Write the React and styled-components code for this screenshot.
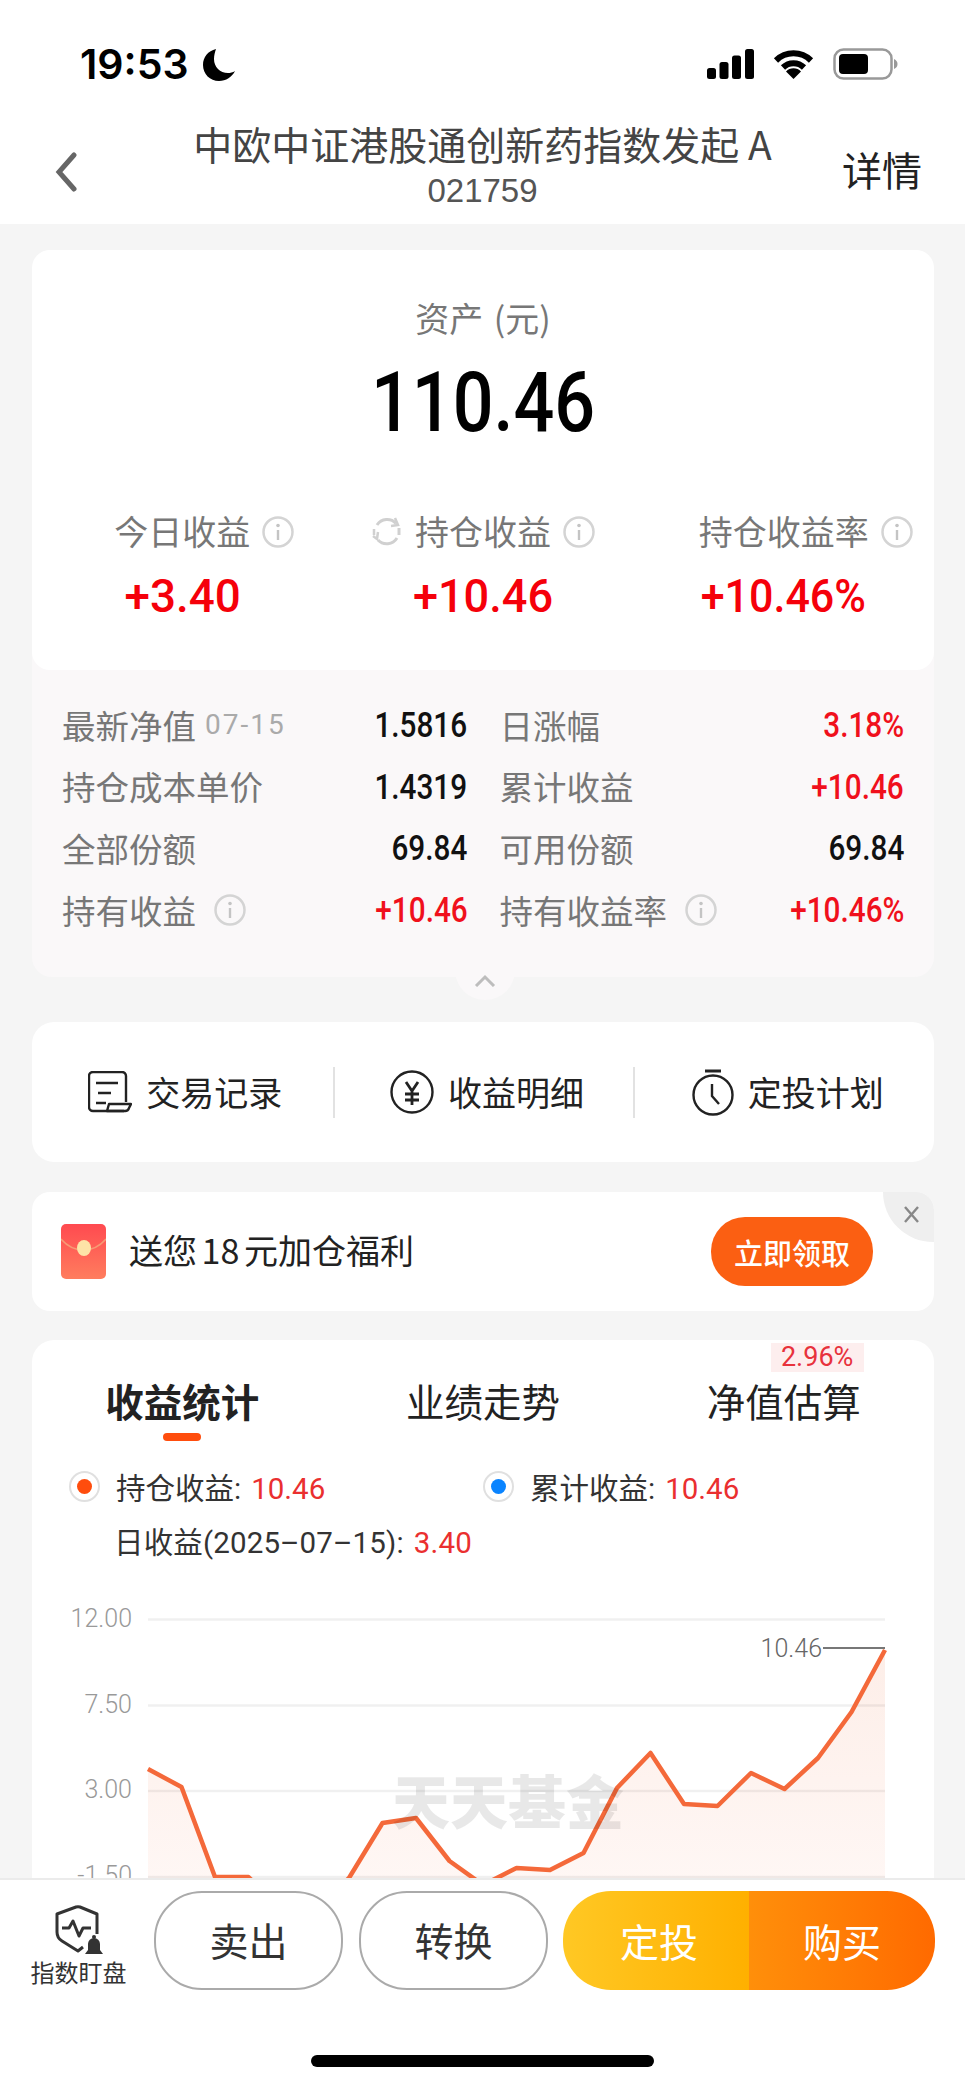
import React from 'react';
import styled, { createGlobalStyle } from 'styled-components';

const CJK = '"Noto Sans CJK SC", sans-serif';
const ROBOTO = 'Roboto, "Noto Sans CJK SC", sans-serif';

const GlobalStyle = createGlobalStyle`
    html, body {
        margin: 0;
        padding: 0;
        background: #ffffff;
    }
    * {
        box-sizing: border-box;
    }
`;

const Page = styled.div`
    width: 965px;
    height: 2088px;
    display: flex;
    flex-direction: column;
    overflow: hidden;
    background: #ffffff;
    font-family: ${CJK};
`;

const StatusBar = styled.div`
    height: 100px;
    flex: none;
    padding: 48px 67px 0 80px;
    display: flex;
    align-items: flex-start;
    justify-content: space-between;
`;

const TimeGroup = styled.div`
    display: flex;
    align-items: center;
    gap: 14px;
    height: 33px;
`;

const Time = styled.span`
    font-family: Inter, sans-serif;
    font-weight: 600;
    font-size: 41px;
    line-height: 33px;
    color: #000000;
`;

const StatusIcons = styled.div`
    display: flex;
    align-items: center;
    gap: 19px;
`;

const NavBar = styled.div`
    height: 124px;
    flex: none;
    display: grid;
    grid-template-columns: 1fr auto 1fr;
    background: #ffffff;
`;

const BackCell = styled.div`
    padding: 52px 0 0 53px;
`;

const TitleBlock = styled.div`
    padding-top: 21px;
    display: flex;
    flex-direction: column;
    align-items: center;
`;

const Title = styled.div`
    font-size: 39px;
    line-height: 44px;
    color: #444444;
`;

const FundCode = styled.div`
    margin-top: 4px;
    font-family: "Liberation Sans", sans-serif;
    font-size: 33px;
    line-height: 44px;
    color: #555555;
`;

const DetailLink = styled.div`
    justify-self: end;
    padding: 46px 43px 0 0;
    font-size: 40px;
    line-height: 46px;
    color: #222222;
`;

const Main = styled.div`
    flex: 1;
    min-height: 0;
    overflow: hidden;
    background: #f5f5f5;
    padding: 26px 31px 0 32px;
`;

const AssetGroup = styled.div`
    position: relative;
    background: #faf8f9;
    border-radius: 20px;
`;

const HeroCard = styled.div`
    height: 420px;
    background: #ffffff;
    border-radius: 18px;
    padding-top: 48px;
    display: flex;
    flex-direction: column;
    align-items: center;
`;

const HeroLabel = styled.div`
    font-size: 34px;
    line-height: 40px;
    word-spacing: 3px;
    color: #777777;
`;

const HeroValue = styled.div`
    margin-top: 22px;
    font-family: Roboto, sans-serif;
    font-weight: 500;
    font-size: 84px;
    line-height: 86px;
    color: #000000;
    transform: scaleX(0.855);
`;

const StatGrid = styled.div`
    width: 100%;
    margin-top: 65px;
    display: grid;
    grid-template-columns: repeat(3, 1fr);
`;

const StatCell = styled.div`
    display: flex;
    flex-direction: column;
    align-items: center;
`;

const StatLabel = styled.div`
    position: relative;
    font-size: 34px;
    line-height: 40px;
    color: #777777;
`;

const StatValue = styled.div`
    margin-top: 20px;
    font-family: Roboto, sans-serif;
    font-weight: 500;
    font-size: 47px;
    line-height: 50px;
    color: #f5000a;
    transform: scaleX(${(p) => p.$squeeze});
`;

const AfterIcon = styled.span`
    position: absolute;
    left: 100%;
    top: 5px;
    margin-left: 12px;
    display: flex;
`;

const BeforeIcon = styled.span`
    position: absolute;
    right: 100%;
    top: 5px;
    margin-right: 12px;
    display: flex;
`;

const DetailGrid = styled.div`
    padding: 25px 30px 36px 30px;
    display: grid;
    grid-template-columns: 405.5px 1fr;
    column-gap: 32px;
`;

const DetailRow = styled.div`
    height: 61.6px;
    display: flex;
    align-items: center;
    justify-content: space-between;
`;

const DetailLabel = styled.div`
    display: flex;
    align-items: center;
    padding-bottom: 2px;
    font-size: 33.5px;
    color: #777777;
    line-height: 40px;
`;

const DetailDate = styled.span`
    margin-left: 9px;
    font-family: Roboto, sans-serif;
    font-size: 28px;
    letter-spacing: 2px;
    color: #aaaaaa;
`;

const DetailInfo = styled.span`
    margin-left: 18px;
    display: flex;
`;

const DetailValue = styled.div`
    font-family: Roboto, sans-serif;
    font-weight: 500;
    font-size: 35px;
    color: ${(p) => (p.$red ? '#f0101c' : '#111111')};
    transform: scaleX(0.85);
    transform-origin: right center;
`;

const CollapseTab = styled.div`
    position: absolute;
    left: 423px;
    bottom: -23px;
    width: 60px;
    height: 46px;
    border-radius: 0 0 30px 30px;
    background: #faf8f9;
    display: flex;
    justify-content: center;
    padding-top: 20px;
`;

const ActionCard = styled.div`
    margin-top: 45px;
    height: 140px;
    background: #ffffff;
    border-radius: 22px;
    display: grid;
    grid-template-columns: repeat(3, 1fr);
    align-items: center;
`;

const ActionItem = styled.div`
    height: 51px;
    padding-left: 6px;
    display: flex;
    align-items: center;
    justify-content: center;
    gap: 14px;
    font-size: 34px;
    color: #222222;
    border-left: ${(p) => (p.$divided ? '2px solid #e2e2e2' : 'none')};
`;

const ActionText = styled.span`
    padding-bottom: 2px;
`;

const BannerCard = styled.div`
    position: relative;
    margin-top: 30px;
    height: 119px;
    background: #ffffff;
    border-radius: 18px;
    overflow: hidden;
    padding: 0 61px 0 29px;
    display: flex;
    align-items: center;
`;

const BannerText = styled.div`
    margin-left: 23px;
    padding-bottom: 4px;
    font-size: 34px;
    word-spacing: -3px;
    color: #222222;
`;

const ClaimButton = styled.div`
    margin-left: auto;
    width: 162px;
    height: 69px;
    border-radius: 34px;
    background: #fb5f12;
    color: #ffffff;
    font-size: 29px;
    font-weight: 500;
    display: flex;
    align-items: center;
    justify-content: center;
`;

const CloseCorner = styled.div`
    position: absolute;
    top: 0;
    right: 0;
    width: 51px;
    height: 50px;
    border-radius: 0 0 0 51px;
    background: #efefef;
    display: flex;
    align-items: flex-start;
    justify-content: flex-end;
    padding: 14px 14px 0 0;
`;

const ChartCard = styled.div`
    position: relative;
    margin-top: 29px;
    height: 700px;
    background: #ffffff;
    border-radius: 22px 22px 0 0;
    padding-top: 35px;
`;

const Tabs = styled.div`
    display: grid;
    grid-template-columns: repeat(3, 1fr);
`;

const Tab = styled.div`
    display: flex;
    flex-direction: column;
    align-items: center;
`;

const TabLabel = styled.div`
    position: relative;
    font-size: 38.5px;
    line-height: 50px;
    font-weight: ${(p) => (p.$active ? 700 : 400)};
    color: #222222;
`;

const TabMark = styled.div`
    margin-top: 8px;
    width: 38px;
    height: 8px;
    border-radius: 4px;
    background: ${(p) => (p.$active ? '#ff4d0d' : 'transparent')};
`;

const RateTag = styled.div`
    position: absolute;
    right: -3px;
    top: -32px;
    width: 93px;
    height: 29px;
    background: #fdeeee;
    color: #e8323c;
    font-family: ${ROBOTO};
    font-weight: 400;
    font-size: 27px;
    line-height: 29px;
    text-align: center;
`;

const Legend = styled.div`
    margin-top: 25px;
    padding-left: 37px;
    display: grid;
    grid-template-columns: 414px 1fr;
    row-gap: 14px;
`;

const LegendItem = styled.div`
    display: flex;
    align-items: center;
    gap: 16px;
    height: 40px;
    font-family: ${ROBOTO};
    font-size: 29.5px;
    color: #333333;
`;

const LegendDot = styled.span`
    width: 31px;
    height: 31px;
    border-radius: 50%;
    border: 2px solid #e0e0e0;
    background: #ffffff;
    display: flex;
    align-items: center;
    justify-content: center;

    &::after {
        content: '';
        width: 15px;
        height: 15px;
        border-radius: 50%;
        background: ${(p) => p.$color};
    }
`;

const LegendNote = styled.div`
    grid-column: 1 / -1;
    padding: 3px 0 0 45px;
    height: 40px;
    line-height: 40px;
    font-family: ${ROBOTO};
    font-size: 29.5px;
    letter-spacing: 0.15px;
    color: #333333;
`;

const RedNumber = styled.span`
    margin-left: 10px;
    color: #ea2f2f;
`;

const ChartWrap = styled.div`
    position: relative;
    margin-top: 20px;
    height: 320px;
`;

const Watermark = styled.div`
    position: absolute;
    left: 360px;
    top: 189px;
    font-size: 58px;
    line-height: 60px;
    font-weight: 900;
    color: rgba(0, 0, 0, 0.09);
`;

const Footer = styled.div`
    height: 210px;
    flex: none;
    background: #ffffff;
    border-top: 2px solid #ebebeb;
    padding-top: 11px;
    display: flex;
    flex-direction: column;
    align-items: center;
`;

const FooterRow = styled.div`
    width: 100%;
    height: 99px;
    padding-right: 30px;
    display: flex;
`;

const Monitor = styled.div`
    width: 154px;
    flex: none;
    padding: 14px 0 0 3px;
    display: flex;
    flex-direction: column;
    align-items: center;
    font-size: 24px;
    line-height: 32px;
    color: #333333;
`;

const OutlineButton = styled.div`
    width: 189px;
    margin-right: 16px;
    padding-bottom: 4px;
    border: 2px solid #aaaaaa;
    border-radius: 48px;
    font-size: 39px;
    color: #333333;
    display: flex;
    align-items: center;
    justify-content: center;
`;

const BuyGroup = styled.div`
    flex: 1;
    margin-left: -1px;
    border-radius: 48px;
    overflow: hidden;
    display: flex;
`;

const BuyPart = styled.div`
    width: ${(p) => p.$width}px;
    padding: 0 0 2px ${(p) => p.$inset}px;
    background: linear-gradient(90deg, ${(p) => p.$from}, ${(p) => p.$to});
    color: #ffffff;
    font-size: 39px;
    display: flex;
    align-items: center;
    justify-content: center;
`;

const HomeBar = styled.div`
    margin-top: 65px;
    width: 343px;
    height: 12px;
    border-radius: 6px;
    background: #000000;
`;

const InfoIcon = () => (
    <svg width="32" height="32" viewBox="0 0 32 32">
        <circle cx="16" cy="16" r="14.5" fill="none" stroke="#d4d4d4" strokeWidth="2.5" />
        <circle cx="16" cy="9.5" r="1.8" fill="#c4c4c4" />
        <path d="M16 14v10" stroke="#c4c4c4" strokeWidth="2.4" />
    </svg>
);

const RefreshIcon = () => (
    <svg width="33" height="32" viewBox="0 0 33 32" fill="none" stroke="#d0d0d0" strokeWidth="3">
        <path d="M7 9a12 12 0 0 1 19-1.5" />
        <path d="M27 22a12 12 0 0 1-19 2" />
        <path d="M25 2l3 7-7 1" strokeWidth="2.5" />
        <path d="M3 20l4 3 1-7M4 13v6" strokeWidth="2.5" />
        <path d="M29 12v7" />
    </svg>
);

const SignalIcon = () => (
    <svg width="47" height="30" viewBox="0 0 47 30">
        <rect x="0" y="19" width="9" height="11" rx="2.5" />
        <rect x="12.5" y="13" width="9" height="17" rx="2.5" />
        <rect x="25" y="6.5" width="9" height="23.5" rx="2.5" />
        <rect x="38" y="0" width="9" height="30" rx="2.5" />
    </svg>
);

const WifiIcon = () => (
    <svg width="41" height="30" viewBox="0 0 41 30">
        <path d="M3 11.5a25 25 0 0 1 35 0" fill="none" stroke="#000" strokeWidth="6" />
        <path d="M10 18.5a15 15 0 0 1 21 0" fill="none" stroke="#000" strokeWidth="6" />
        <path d="M20.5 30L13 22.5a10.5 10.5 0 0 1 15 0z" />
    </svg>
);

const BatteryIcon = () => (
    <svg width="65" height="32" viewBox="0 0 65 32">
        <rect x="1.5" y="1.5" width="57" height="29" rx="9" fill="none" stroke="#999" strokeWidth="2.5" />
        <rect x="6" y="6" width="29" height="20" rx="4" />
        <path d="M61 11c2.5 1 3.5 3 3.5 5s-1 4-3.5 5z" fill="#999" />
    </svg>
);

const RecordIcon = () => (
    <svg width="44" height="42" viewBox="0 0 44 42" fill="none" stroke="#222" strokeWidth="2.4" strokeLinejoin="round">
        <path d="M38 31V5a4 4 0 0 0-4-4H5a4 4 0 0 0-4 4v31a4 4 0 0 0 4 4h31" />
        <path d="M21 33h22l-2 4a4 4 0 0 1-4 3H19l2-7z" />
        <path d="M8 12h22M10 22h13M8 32h10" />
    </svg>
);

const YenIcon = () => (
    <svg width="44" height="44" viewBox="0 0 44 44" fill="none" stroke="#222" strokeWidth="2.4">
        <circle cx="22" cy="22" r="20.5" />
        <path d="M16 12l6 9 6-9M15 24h14M15 30h14M22 21v14" strokeWidth="2.8" />
    </svg>
);

const TimerIcon = () => (
    <svg width="42" height="47" viewBox="0 0 42 47" fill="none" stroke="#222" strokeWidth="2.4">
        <circle cx="21" cy="26" r="19.5" />
        <path d="M13 2h16" strokeWidth="3" />
        <path d="M20 15v12l7 8" />
    </svg>
);

const RedPacket = () => (
    <svg width="45" height="55" viewBox="0 0 45 55">
        <defs>
            <linearGradient id="packet" x1="0" y1="0" x2="0" y2="1">
                <stop offset="0" stopColor="#ff4a50" />
                <stop offset="1" stopColor="#ff7d5e" />
            </linearGradient>
        </defs>
        <rect width="45" height="55" rx="5" fill="url(#packet)" />
        <path d="M0 15c7 8 15 11 22.5 11S38 23 45 15" fill="none" stroke="#f79a74" strokeWidth="1.5" />
        <ellipse cx="23" cy="24" rx="7" ry="8" fill="#fde3a7" />
    </svg>
);

const MonitorIcon = () => (
    <svg width="50" height="51" viewBox="0 0 50 51" fill="none" stroke="#333" strokeWidth="3">
        <path d="M29 42l-5 4L8 36q-5-3-5-9V9L22 2q2-.6 4 0l17 7v20" strokeLinejoin="round" />
        <path d="M8 23h7l4-7 6 15 4-8h8" strokeLinejoin="round" />
        <path d="M31 49h18l-3-4v-6a6 6 0 0 0-12 0v6z" fill="#333" stroke="none" />
        <circle cx="40" cy="32" r="2" fill="#333" stroke="none" />
    </svg>
);

const pointsY = [189, 207, 297, 297, 330, 330, 298, 243, 238, 281, 305, 288, 290, 273, 208, 173, 224, 226, 193, 209, 178, 132, 70];
const linePath = pointsY.map((y, i) => `${i === 0 ? 'M' : 'L'}${(116 + i * 33.5).toFixed(1)} ${y}`).join(' ');
const areaPath = `${linePath} L853 330 L116 330 Z`;

const gridLines = [
    { y: 39.5, label: '12.00' },
    { y: 125.5, label: '7.50' },
    { y: 211, label: '3.00' },
    { y: 297, label: '-1.50' },
];

const ProfitChart = () => (
    <svg width="902" height="320" viewBox="0 0 902 320">
        <defs>
            <linearGradient id="area" x1="0" y1="0" x2="0" y2="1">
                <stop offset="0" stopColor="#fdeee8" />
                <stop offset="1" stopColor="#fff8f6" />
            </linearGradient>
        </defs>
        {gridLines.map((g) => (
            <text key={g.label} x="100" y={g.y + 7} textAnchor="end" fontFamily="Roboto, sans-serif" fontWeight="300" fontSize="25" fill="#999">
                {g.label}
            </text>
        ))}
        <path d={areaPath} fill="url(#area)" />
        {gridLines.map((g) => (
            <line key={g.y} x1="116" x2="853" y1={g.y} y2={g.y} stroke="#000" strokeOpacity="0.06" strokeWidth="2.5" />
        ))}
        <path d={linePath} fill="none" stroke="#f4693a" strokeWidth="4.5" strokeLinejoin="round" />
        <path d="M791 68H853" stroke="#777" strokeWidth="2" />
        <text x="790" y="77" textAnchor="end" fontFamily="Roboto, sans-serif" fontWeight="300" fontSize="25" fill="#666">
            10.46
        </text>
    </svg>
);

const details = [
    { label: '最新净值', date: '07-15', value: '1.5816' },
    { label: '日涨幅', value: '3.18%', red: true },
    { label: '持仓成本单价', value: '1.4319' },
    { label: '累计收益', value: '+10.46', red: true },
    { label: '全部份额', value: '69.84' },
    { label: '可用份额', value: '69.84' },
    { label: '持有收益', info: true, value: '+10.46', red: true },
    { label: '持有收益率', info: true, value: '+10.46%', red: true },
];

export default function App() {
    return (
        <Page>
            <GlobalStyle />
            <StatusBar>
                <TimeGroup>
                    <Time>19:53</Time>
                    <svg width="32" height="33" viewBox="0 0 32 33">
                        <path d="M13 1C5 3 0 9 0 17c0 9 7 16 16 16 7 0 13-4 16-10-2 1.5-5 2-7 2-8 0-14-6-14-14 0-4 1-7 2-10z" />
                    </svg>
                </TimeGroup>
                <StatusIcons>
                    <SignalIcon />
                    <WifiIcon />
                    <BatteryIcon />
                </StatusIcons>
            </StatusBar>
            <NavBar>
                <BackCell>
                    <svg width="26" height="40" viewBox="0 0 26 40" fill="none" stroke="#666" strokeWidth="5" strokeLinecap="round">
                        <path d="M21 3L6 20l15 17" />
                    </svg>
                </BackCell>
                <TitleBlock>
                    <Title>中欧中证港股通创新药指数发起 A</Title>
                    <FundCode>021759</FundCode>
                </TitleBlock>
                <DetailLink>详情</DetailLink>
            </NavBar>
            <Main>
                <AssetGroup>
                    <HeroCard>
                        <HeroLabel>资产 (元)</HeroLabel>
                        <HeroValue>110.46</HeroValue>
                        <StatGrid>
                            <StatCell>
                                <StatLabel>
                                    今日收益
                                    <AfterIcon><InfoIcon /></AfterIcon>
                                </StatLabel>
                                <StatValue $squeeze={0.975}>+3.40</StatValue>
                            </StatCell>
                            <StatCell>
                                <StatLabel>
                                    <BeforeIcon><RefreshIcon /></BeforeIcon>
                                    持仓收益
                                    <AfterIcon><InfoIcon /></AfterIcon>
                                </StatLabel>
                                <StatValue $squeeze={0.96}>+10.46</StatValue>
                            </StatCell>
                            <StatCell>
                                <StatLabel>
                                    持仓收益率
                                    <AfterIcon><InfoIcon /></AfterIcon>
                                </StatLabel>
                                <StatValue $squeeze={0.915}>+10.46%</StatValue>
                            </StatCell>
                        </StatGrid>
                    </HeroCard>
                    <DetailGrid>
                        {details.map((d) => (
                            <DetailRow key={d.label}>
                                <DetailLabel>
                                    {d.label}
                                    {d.date && <DetailDate>{d.date}</DetailDate>}
                                    {d.info && <DetailInfo><InfoIcon /></DetailInfo>}
                                </DetailLabel>
                                <DetailValue $red={d.red}>{d.value}</DetailValue>
                            </DetailRow>
                        ))}
                    </DetailGrid>
                    <CollapseTab>
                        <svg width="22" height="13" viewBox="0 0 22 13" fill="none" stroke="#bdbdbd" strokeWidth="3">
                            <path d="M2 12L11 3l9 9" />
                        </svg>
                    </CollapseTab>
                </AssetGroup>

                <ActionCard>
                    <ActionItem>
                        <RecordIcon />
                        <ActionText>交易记录</ActionText>
                    </ActionItem>
                    <ActionItem $divided>
                        <YenIcon />
                        <ActionText>收益明细</ActionText>
                    </ActionItem>
                    <ActionItem $divided>
                        <TimerIcon />
                        <ActionText>定投计划</ActionText>
                    </ActionItem>
                </ActionCard>

                <BannerCard>
                    <RedPacket />
                    <BannerText>送您 18 元加仓福利</BannerText>
                    <ClaimButton>立即领取</ClaimButton>
                    <CloseCorner>
                        <svg width="17" height="17" viewBox="0 0 17 17" stroke="#888" strokeWidth="2.4">
                            <path d="M2 1l13 15M15 1L2 16" />
                        </svg>
                    </CloseCorner>
                </BannerCard>

                <ChartCard>
                    <Tabs>
                        <Tab>
                            <TabLabel $active>收益统计</TabLabel>
                            <TabMark $active />
                        </Tab>
                        <Tab>
                            <TabLabel>业绩走势</TabLabel>
                            <TabMark />
                        </Tab>
                        <Tab>
                            <TabLabel>
                                净值估算
                                <RateTag>2.96%</RateTag>
                            </TabLabel>
                            <TabMark />
                        </Tab>
                    </Tabs>
                    <Legend>
                        <LegendItem>
                            <LegendDot $color="#ff4d0d" />
                            <span>持仓收益:<RedNumber>10.46</RedNumber></span>
                        </LegendItem>
                        <LegendItem>
                            <LegendDot $color="#0a84ff" />
                            <span>累计收益:<RedNumber>10.46</RedNumber></span>
                        </LegendItem>
                        <LegendNote>日收益(2025–07–15):<RedNumber>3.40</RedNumber></LegendNote>
                    </Legend>
                    <ChartWrap>
                        <ProfitChart />
                        <Watermark>天天基金</Watermark>
                    </ChartWrap>
                </ChartCard>
            </Main>
            <Footer>
                <FooterRow>
                    <Monitor>
                        <MonitorIcon />
                        指数盯盘
                    </Monitor>
                    <OutlineButton>卖出</OutlineButton>
                    <OutlineButton>转换</OutlineButton>
                    <BuyGroup>
                        <BuyPart $width={186} $inset={6} $from="#ffc824" $to="#ffb000">定投</BuyPart>
                        <BuyPart $width={186} $inset={0} $from="#ff8f0a" $to="#ff6a00">购买</BuyPart>
                    </BuyGroup>
                </FooterRow>
                <HomeBar />
            </Footer>
        </Page>
    );
}
